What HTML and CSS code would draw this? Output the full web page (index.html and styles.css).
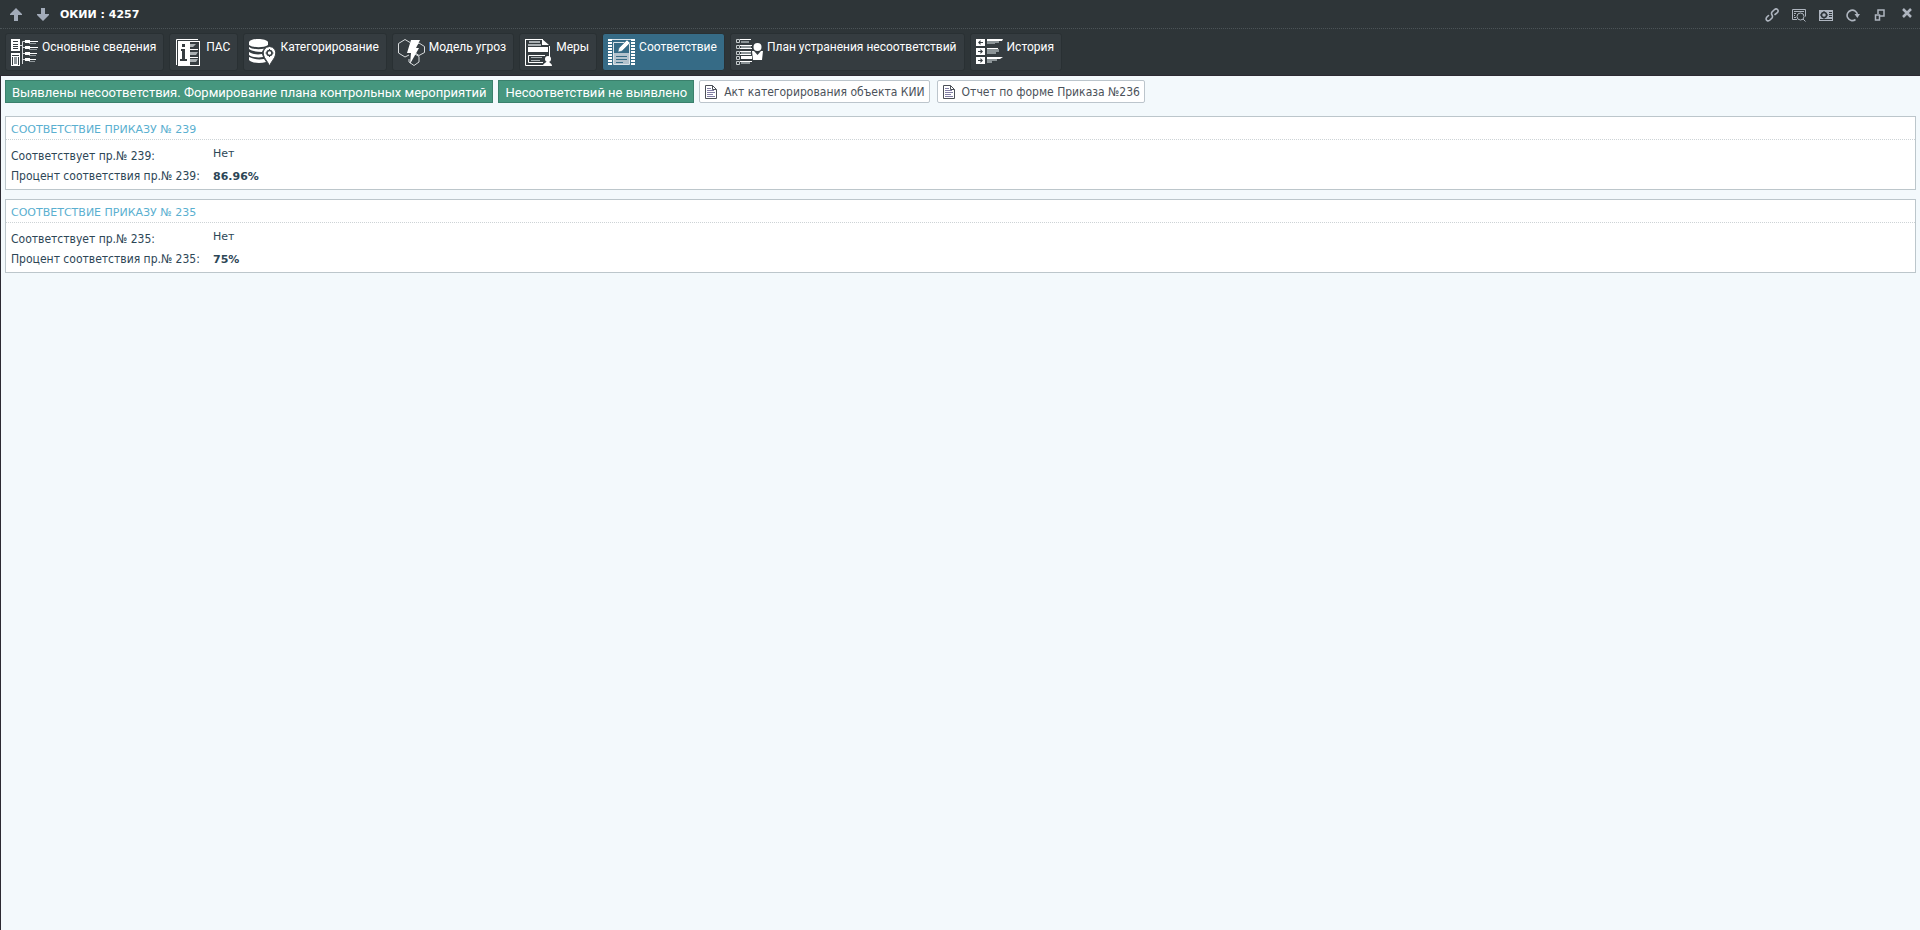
FILE: index.html
```
<!DOCTYPE html>
<html lang="ru">
<head>
    <meta charset="UTF-8">
    <meta name="viewport" content="width=device-width, initial-scale=1.0">
    <title>ОКИИ : 4257</title>
    <link rel="stylesheet" href="styles.css">
</head>
<body>

<header class="titlebar">
    <button type="button" class="icon-btn" aria-label="Предыдущая">
        <svg width="12" height="13" viewBox="0 0 12 13"><path fill="#a2abb9" d="M6 0l6 6v1H8v6H4V7H0V6z"/></svg>
    </button>
    <button type="button" class="icon-btn" aria-label="Следующая">
        <svg width="12" height="13" viewBox="0 0 12 13"><path fill="#a2abb9" d="M6 13L0 7V6h4V0h4v6h4v1z"/></svg>
    </button>
    <h1 class="title">ОКИИ : 4257</h1>
    <div class="tools">
        <button type="button" class="icon-btn" aria-label="Ссылка">
            <svg width="14" height="14" viewBox="0 0 14 14" fill="none" stroke="#aeb5bf" stroke-width="1.6" stroke-linecap="round"><path d="M10 6.500l2-1.500Q14 3 12.500 1.500T9 2L7 4Q6 5.500 7 7T7 10L5 12Q3.500 13.500 2 12.500T1.500 9.500L3.500 7.500"/></svg>
        </button>
        <button type="button" class="icon-btn" aria-label="Просмотр">
            <svg width="14" height="14" viewBox="0 0 14 14" fill="none" stroke="#aeb5bf"><path d="M5 11.500H.5v-10h13v7M2 3.500h10M2 5.500h2M2 7.500h1M2 9.500h2M11 11l2.500 2.500"/><circle cx="8.500" cy="8.500" r="3.500"/></svg>
        </button>
        <button type="button" class="icon-btn" aria-label="Настройки карточки">
            <svg width="14" height="14" viewBox="0 0 14 14"><path fill="#aeb5bf" d="M0 2h14v11H0z"/><circle cx="5" cy="7" r="2.500" fill="none" stroke="#2e3538" stroke-width="1.500"/><path stroke="#2e3538" d="M5 3v1.500M5 9.500V11M1 7h1.500M7.500 7H9M10 4.500h3M10 6.500h3M10 8.500h3M1 11.500h12"/></svg>
        </button>
        <button type="button" class="icon-btn" aria-label="Обновить">
            <svg width="14" height="14" viewBox="0 0 14 14"><path fill="none" stroke="#aeb5bf" stroke-width="1.600" d="M9.500 11.500A5.200 5.200 0 1 1 11.500 7"/><path fill="#aeb5bf" d="M8.500 6H14l-2.700 4z"/></svg>
        </button>
        <button type="button" class="icon-btn" aria-label="Развернуть">
            <svg width="14" height="14" viewBox="0 0 14 14" fill="none" stroke="#aeb5bf" stroke-width="1.500"><path d="M5 6V2h6v6H7M2.500 7h4v5h-4z"/></svg>
        </button>
        <button type="button" class="icon-btn close" aria-label="Закрыть">
            <svg width="14" height="10" viewBox="0 0 14 10"><path stroke="#aeb5bf" stroke-width="2.500" d="M3 1l8 8M11 1L3 9"/></svg>
        </button>
    </div>
</header>

<nav class="tabs">
    <a href="#" class="tab">
        <svg class="tab-icon" viewBox="0 0 27 27"><path fill="#fff" d="M0 0h9v12H0zM0 14h9v13H0zM14 1h5v1h8v1h-8v1h-5zM14 7h5v1h8v1h-8v1h-5zM14 13h5v1h7v1h-7v1h-5zM14 19h5v1h6v1h-6v1h-5z"/><path stroke="#353c40" d="M2 2.500h5M2 5.500h5M2 7.500h5M2 9.500h5M1 16.500h7M1.500 18v8M7.500 18v8"/><path fill="#90979b" d="M3 18h3v7H3z"/><path fill="none" stroke="#d6d9dc" d="M9 6.500h2M11.500 25V2.500H14M11.500 8.500H14M11.500 14.500H14M11.500 20.500H14"/><path stroke="#90979b" d="M18 4.500h7M18 10.500h8M18 16.500h7M18 22.500h6"/></svg>
        <span>Основные сведения</span>
    </a>
    <a href="#" class="tab">
        <svg class="tab-icon" viewBox="0 0 27 27"><path fill="none" stroke="#fff" d="M1.500 26V.5H23"/><path fill="#fff" d="M3 2h12v25H3z"/><path fill="#aab0b3" d="M15 13h8l-2 3h-6zM15 5h6l-3 3h-3zM15 20h8l-2 3h-6z"/><path stroke="#fff" d="M15 2.500h10M24.500 2v25M15 26.500h10M15 10.500h8M15 18.500h8"/><path fill="#353c40" d="M7 5h3v3H7zM6 10h4v10h2v2H5v-2h2v-8H6z"/></svg>
        <span>ПАС</span>
    </a>
    <a href="#" class="tab">
        <svg class="tab-icon" viewBox="0 0 27 27"><path fill="#fff" d="M0 3c2-4 17-4 19 0v3C15 9 4 9 0 6zM0 8c4 3 15 3 19 0-3 1-5 2-6 5-5 0-11-1-13-3zM0 13c3 2 8 3 13 2l1 3c-5 1-12 0-14-2zM0 18c4 2 9 3 15 2l2 3c-6 2-15 1-17-2z"/><path fill="#fff" stroke="#353c40" d="M20.500 7.500a6.500 6.500 0 0 1 6 8.500c-1 4-4 6-6 11-2-5-5-7-6-11a6.500 6.500 0 0 1 6-8.500z"/><circle cx="20.500" cy="14" r="2.500" fill="none" stroke="#353c40" stroke-width="1.500"/><path stroke="#353c40" d="M20.500 10v2M20.500 16v2M16.500 14h2M22.500 14h2"/></svg>
        <span>Категорирование</span>
    </a>
    <a href="#" class="tab">
        <svg class="tab-icon" viewBox="0 0 27 27"><path fill="none" stroke="#d9dcde" d="M11 16l-4 2-6.500-4V4.500L7 .5l5 3M18 6l3-2 5.500 3.500v6L21 16.500l-3-2M17 15l4 2.500v5.500l-5 3.500-5-3.500v-3"/><path fill="#fff" d="M13 1h9l-4 8h3l-9 16 1-11h-4z"/></svg>
        <span>Модель угроз</span>
    </a>
    <a href="#" class="tab">
        <svg class="tab-icon" viewBox="0 0 27 27"><path fill="none" stroke="#fff" d="M.5.500H18M24.500 7v12M.5 0v26.500H18"/><path fill="#fff" d="M17 0l7 6h-7zM3 8h20v5H3z"/><path stroke="#aab0b3" stroke-width="2" d="M4 3h11M3 6h13"/><path fill="none" stroke="#fff" d="M20 16.500H3.500v7H18"/><path stroke="#aab0b3" d="M6 18.500h11M6 21.500h9"/><circle cx="23" cy="20" r="3" fill="#fff"/><path fill="#fff" d="M18 27c0-3 3-3 4-5h2c0 2 3 2 3 5z"/></svg>
        <span>Меры</span>
    </a>
    <a href="#" class="tab active" aria-current="page">
        <svg class="tab-icon" viewBox="0 0 27 27"><path stroke="#fff" stroke-width="4" stroke-dasharray="2 1" d="M2 0v26M25 0v26"/><path fill="none" stroke="#dbe4ea" d="M5.500 3.500h16v22h-16zM4 .5h19"/><path fill="#b3c2cd" d="M6 14h15v11H6z"/><path stroke="#366b86" d="M8 17.500h11M8 20.500h11M8 23.500h7"/><path fill="#fff" stroke="#366b86" stroke-width=".5" d="M11 9l8-8 3 3-8 8-4 1z"/></svg>
        <span>Соответствие</span>
    </a>
    <a href="#" class="tab">
        <svg class="tab-icon" viewBox="0 0 27 27"><path fill="none" stroke="#c5cacc" d="M.5.500h3v3h-3zM.5 6.500h3v3h-3zM.5 12.500h3v3h-3zM.5 17.500h3v3h-3zM.5 22.500h3v3h-3z"/><path stroke="#fff" d="M4 .5h11M4 6.500h12M4 9.500h12M4 12.500h11M4 15.500h11"/><path fill="#fff" d="M5 17h11v3H5z"/><path stroke="#8c9497" stroke-width="2" d="M5 3h8M5 8h10M5 14h10M5 24h9"/><path stroke="#fff" d="M4 22.500h12"/><circle cx="21.500" cy="8" r="4" fill="#fff"/><path fill="#fff" d="M16 12l2 0 3.500 4 3.500-4h2l-1 9h-9z"/></svg>
        <span>План устранения несоответствий</span>
    </a>
    <a href="#" class="tab">
        <svg class="tab-icon" viewBox="0 0 27 27"><path fill="#fff" d="M0 0h9v7H0zM0 9h9v7H0zM0 18h9v7H0z"/><path fill="#353c40" d="M2 3.500L4.500 1v2H7v1H4.500v2zM7 12.500L4.500 10v2H2v1h2.500v2zM7 21.500L4.500 19v2H2v1h2.500v2z"/><path fill="#fff" d="M11 0h16l-1 2H11zM11 9h11v1H11zM11 18h16l-3 2H11z"/><path fill="#8c9497" d="M11 2h12v2h-4v1h-8zM11 10h12v3h-3v2h-9zM11 20h10v2h-5v2h-5z"/></svg>
        <span>История</span>
    </a>
</nav>

<main class="content">
    <div class="actions">
        <button type="button" class="btn btn-green">Выявлены несоответствия. Формирование плана контрольных мероприятий</button>
        <button type="button" class="btn btn-green">Несоответствий не выявлено</button>
        <button type="button" class="btn btn-report">
            <svg width="12" height="14" viewBox="0 0 12 14"><path fill="#fff" stroke="#4c5058" d="M.5.500h7l4 4v9H.5zM7.500.500v4h4"/><path stroke="#817da4" d="M2 3.500h4M2 5.500h7M2 7.500h8M2 9.500h6M2 11.500h8"/></svg>
            Акт категорирования объекта КИИ
        </button>
        <button type="button" class="btn btn-report">
            <svg width="12" height="14" viewBox="0 0 12 14"><path fill="#fff" stroke="#4c5058" d="M.5.500h7l4 4v9H.5zM7.500.500v4h4"/><path stroke="#817da4" d="M2 3.500h4M2 5.500h7M2 7.500h8M2 9.500h6M2 11.500h8"/></svg>
            Отчет по форме Приказа №236
        </button>
    </div>

    <section class="panel">
        <h2 class="panel-title">СООТВЕТСТВИЕ ПРИКАЗУ № 239</h2>
        <dl class="fields">
            <dt>Соответствует пр.№ 239:</dt>
            <dd>Нет</dd>
            <dt>Процент соответствия пр.№ 239:</dt>
            <dd class="percent">86.96%</dd>
        </dl>
    </section>

    <section class="panel">
        <h2 class="panel-title">СООТВЕТСТВИЕ ПРИКАЗУ № 235</h2>
        <dl class="fields">
            <dt>Соответствует пр.№ 235:</dt>
            <dd>Нет</dd>
            <dt>Процент соответствия пр.№ 235:</dt>
            <dd class="percent">75%</dd>
        </dl>
    </section>
</main>

</body>
</html>
```
FILE: styles.css
```
* {
    box-sizing: border-box;
}
body {
    margin: 0;
    min-height: 100vh;
    display: flex;
    flex-direction: column;
    background-color: #f3f9fc;
    color: #2d4656;
    font-family: Verdana, "DejaVu Sans", sans-serif;
    font-size: 11px;
}
button {
    font-family: inherit;
    cursor: pointer;
}
svg {
    display: block;
    flex-shrink: 0;
}

/* title bar */
.titlebar {
    display: flex;
    align-items: center;
    gap: 15px;
    height: 29px;
    padding: 1px 6px 0 10px;
    background-color: #2e3538;
    border-bottom: 1px dotted #4b5357;
}
.icon-btn {
    padding: 0;
    border: none;
    background: none;
}
.title {
    margin: 0 0 0 -4px;
    color: #fff;
    font-size: 11px;
    font-weight: bold;
}
.tools {
    display: flex;
    align-items: center;
    gap: 13px;
    margin-left: auto;
}
.close {
    padding-bottom: 3px;
}

/* tabs */
.tabs {
    display: flex;
    flex-wrap: wrap;
    gap: 5px;
    padding: 4px 5px;
    background-color: #2e3538;
    border-bottom: 1px solid #2c2a32;
}
.tab {
    display: flex;
    gap: 4px;
    height: 38px;
    padding: 5px 7px 4px 5px;
    border: 1px solid #293033;
    border-radius: 3px;
    background-color: #353c40;
    color: #fff;
    font: 12px/16px Roboto, Tahoma, sans-serif;
    text-decoration: none;
    white-space: nowrap;
}
.tab.active {
    background-color: #366b86;
}
.tab-icon {
    width: 27px;
    height: 27px;
}

/* page body */
.content {
    flex: 1;
    padding: 4px 4px 0;
    border-left: 1px solid #2c2a32;
}
.actions {
    display: flex;
    flex-wrap: wrap;
    gap: 5px;
    margin-bottom: 13px;
}
.btn {
    display: flex;
    align-items: center;
    height: 23px;
}
.btn-green {
    padding: 1px 6px 0;
    border: 1px solid #3a806c;
    background-color: #46977f;
    color: #fff;
    font-family: Roboto, Tahoma, sans-serif;
    font-size: 13px;
}
.btn-report {
    gap: 7px;
    margin-right: 2px;
    padding: 0 4px 0 5px;
    border: 1px solid #bcc5cc;
    border-radius: 2px;
    background-color: #fff;
    color: #4b525a;
    font-family: "DejaVu Sans Condensed", Verdana, sans-serif;
    font-size: 12px;
}

.panel {
    margin-bottom: 9px;
    border: 1px solid #bcc6cb;
    background-color: #fff;
}
.panel-title {
    margin: 0;
    padding: 3px 5px 0;
    border-bottom: 1px dotted #cdd3d6;
    color: #5aafd0;
    font-size: 11px;
    font-weight: normal;
    line-height: 19px;
}
.fields {
    display: grid;
    grid-template-columns: 202px 1fr;
    margin: 0;
    padding: 5px 5px 4px;
    line-height: 17px;
}
.fields dt {
    padding-top: 3px;
    font-family: "DejaVu Sans Condensed", Verdana, sans-serif;
    font-size: 12px;
}
.fields dd {
    margin: 0;
}
.fields .percent {
    padding-top: 3px;
    font-weight: bold;
}
```
